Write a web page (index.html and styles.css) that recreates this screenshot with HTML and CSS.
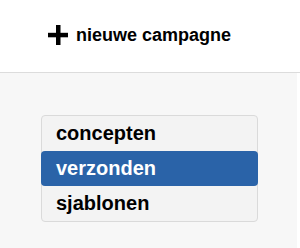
FILE: index.html
```html
<!DOCTYPE html>
<html lang="nl">
<head>
  <meta charset="UTF-8">
  <meta name="viewport" content="width=device-width, initial-scale=1.0">
  <title>Campagnes</title>
  <link rel="stylesheet" href="styles.css">
</head>
<body>
  <header class="top-bar">
    <a href="#" class="new-button">
      <svg class="plus-icon" width="20" height="20" viewBox="0 0 20 20">
        <rect x="8" y="0" width="4.5" height="20" fill="#000"/>
        <rect x="0" y="7.8" width="20" height="4.5" fill="#000"/>
      </svg>
      <span>nieuwe campagne</span>
    </a>
  </header>

  <main class="content">
    <nav class="list-menu">
      <a href="#" class="list-item">concepten</a>
      <a href="#" class="list-item active">verzonden</a>
      <a href="#" class="list-item">sjablonen</a>
    </nav>
  </main>
</body>
</html>
```

FILE: styles.css
```css
* {
  box-sizing: border-box;
  font-family: 'Liberation Sans', Arial, sans-serif;
}

html,
body {
  height: 100%;
}

body {
  margin: 0;
  background-color: #f7f7f7;
  display: flex;
  flex-direction: column;
}

.top-bar {
  height: 73px;
  background-color: #fff;
  border-bottom: 1px solid #dcdcdc;
  display: flex;
  align-items: center;
  padding-left: 48px;
}

.new-button {
  display: flex;
  align-items: center;
  gap: 8px;
  color: #000;
  text-decoration: none;
  font-size: 18px;
  font-weight: bold;
  margin-top: -1px;
}

.plus-icon {
  display: block;
  margin-top: -2px;
}

.content {
  flex: 1;
  padding: 42px 0 0 41px;
  border-right: 3px solid #fff;
}

.list-menu {
  width: 217px;
  background-color: #f3f3f3;
  border: 1px solid #dadada;
  border-radius: 4px;
  display: flex;
  flex-direction: column;
}

.list-item {
  display: block;
  height: 35px;
  line-height: 34px;
  padding-left: 14px;
  color: #000;
  text-decoration: none;
  font-size: 20px;
  font-weight: bold;
}

.list-item.active {
  background-color: #2a63a8;
  color: #fff;
  border-radius: 4px;
  margin: 0 -1px;
  padding-left: 15px;
}
```
